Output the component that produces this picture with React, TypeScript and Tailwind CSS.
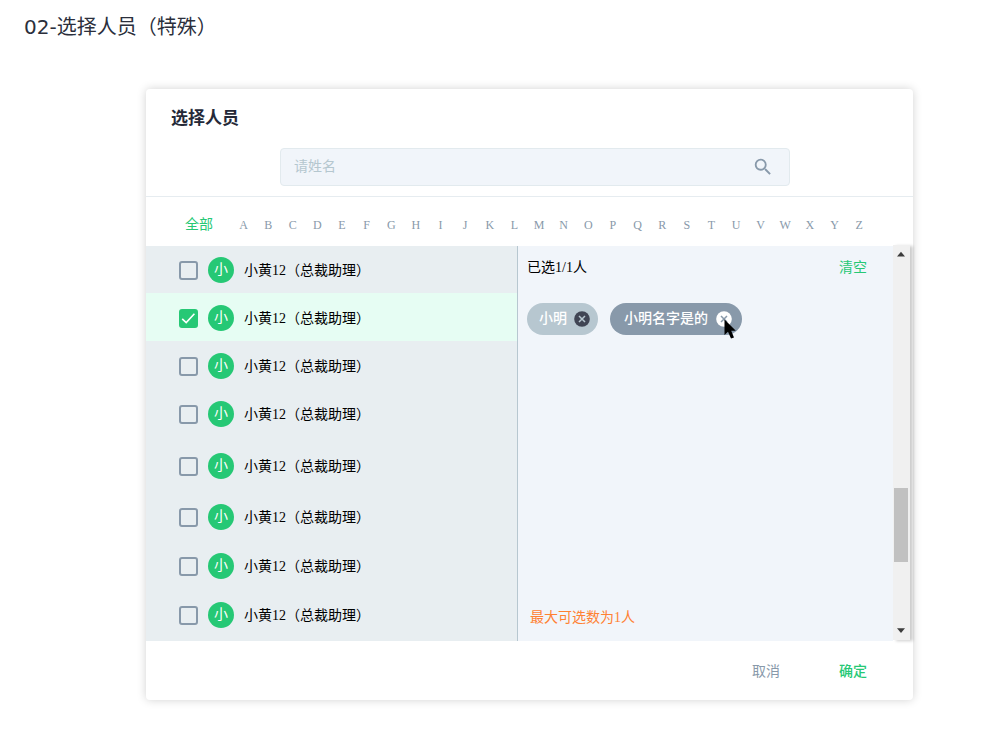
import { useState } from "react";
import { MdSearch } from "react-icons/md";

const LETTERS = "ABCDEFGHIJKLMNOPQRSTUVWXYZ".split("");

const PEOPLE = [
  { id: 1, row: "h-[47px] pt-[11px]" },
  { id: 2, row: "h-[48px] pt-3" },
  { id: 3, row: "h-[48px] pt-3" },
  { id: 4, row: "h-[52px] pt-3" },
  { id: 5, row: "h-[51px] pt-3" },
  { id: 6, row: "h-[49px] pt-3" },
  { id: 7, row: "h-[49px] pt-3" },
  { id: 8, row: "h-[51px] pt-3" },
];

function PersonRow({ id, row, checked, onToggle }: { id: number; row: string; checked: boolean; onToggle: () => void }) {
  return (
    <li className={`${row} ${checked ? "bg-[#e6fdf3]" : ""} pl-[33px]`}>
      <label htmlFor={`person-${id}`} className="flex h-[26px] items-center">
        <span className="grid h-[19px] w-[19px] shrink-0">
          <input
            id={`person-${id}`}
            type="checkbox"
            checked={checked}
            onChange={onToggle}
            className="peer col-start-1 row-start-1 h-[19px] w-[19px] appearance-none rounded-[3px] border-2 border-[#8899aa] checked:border-[#26c875] checked:bg-[#26c875]"
          />
          <svg viewBox="0 0 19 19" className="pointer-events-none invisible col-start-1 row-start-1 h-[19px] w-[19px] peer-checked:visible" fill="none" stroke="#fff" strokeWidth="1.6">
            <path d="M3.2 9.8 7.2 13.6 15.4 4.8" />
          </svg>
        </span>
        <span className="ml-[10px] flex h-[26px] w-[26px] shrink-0 items-center justify-center rounded-full bg-[#26c875] text-sm text-white">小</span>
        <span className="ml-[10px] pt-[2px] text-sm whitespace-nowrap text-black">小黄12（总裁助理）</span>
      </label>
    </li>
  );
}

function CloseIcon({ disc, cross }: { disc: string; cross: string }) {
  return (
    <svg viewBox="0 0 16 16" className="h-4 w-4" aria-hidden="true">
      <circle cx="8" cy="8" r="7.8" fill={disc} />
      <path d="M5 5 11 11M11 5 5 11" stroke={cross} strokeWidth="1.5" />
    </svg>
  );
}

export default function App() {
  const [selected, setSelected] = useState<number[]>([2]);
  const toggle = (id: number) =>
    setSelected((ids) => (ids.includes(id) ? ids.filter((i) => i !== id) : [...ids, id]));

  return (
    <div lang="zh-CN" className="bg-white pb-[34px] font-['Liberation_Serif','Noto_Sans_CJK_SC',sans-serif]">
      <h1 className="px-6 pt-3 font-['DejaVu_Sans','Noto_Sans_CJK_TC',sans-serif] text-xl leading-[30px] text-[#2b2f3c]">02-选择人员（特殊）</h1>

      <section aria-label="选择人员" className="mt-[47px] mr-[84px] ml-[146px] rounded bg-white shadow-[0_0_10px_rgba(0,0,0,0.18)]">
        <header className="border-b border-[#e6ecf0] pb-[10px]">
          <h2 className="px-[25px] pt-[18px] text-[17px] leading-6 font-bold text-[#252938]">选择人员</h2>
          <div className="mt-[17px] mr-[123px] ml-[134px] flex h-[38px] items-center rounded border border-[#e2eaee] bg-[#f1f5fa] pr-[15px] pl-[13px]">
            <input aria-label="姓名" placeholder="请姓名" className="min-w-0 flex-1 bg-transparent text-sm text-[#252938] outline-none placeholder:text-[#b5c7cf]" />
            <button type="button" aria-label="搜索" className="text-[#8899aa]">
              <MdSearch size={22} />
            </button>
          </div>
        </header>

        <nav aria-label="字母筛选" className="flex h-[49px] items-center pt-[6px] pr-[50px] pl-[39px]">
          <button type="button" className="mr-[27px] shrink-0 text-sm text-[#26c875]">全部</button>
          <div className="flex flex-1 justify-between pt-px text-xs text-[#8899aa]">
            {LETTERS.map((l) => (
              <button type="button" key={l} className="flex w-[7px] justify-center">{l}</button>
            ))}
          </div>
        </nav>

        <div className="flex">
          <ul className="w-[371px] shrink-0 bg-[#e8eef1]">
            {PEOPLE.map((p) => (
              <PersonRow key={p.id} id={p.id} row={p.row} checked={selected.includes(p.id)} onToggle={() => toggle(p.id)} />
            ))}
          </ul>

          <div className="flex flex-1 flex-col border-l border-[#b7c7d0] bg-[#f1f5fa]">
            <div className="flex items-center justify-between pt-3 pr-[26px] pl-[9px] text-sm leading-5">
              <p className="text-black">已选1/1人</p>
              <button type="button" className="text-[#26c875]">清空</button>
            </div>
            <div className="mt-[25px] flex gap-3 pl-[9px] text-sm font-medium text-white">
              <span className="flex h-8 items-center gap-[7px] rounded-full bg-[#b7c7d0] pr-2 pl-3">
                小明
                <button type="button" aria-label="移除小明">
                  <CloseIcon disc="#404554" cross="#b7c7d0" />
                </button>
              </span>
              <span className="relative flex h-8 items-center gap-2 rounded-full bg-[#8899aa] pr-[10px] pl-[14px]">
                小明名字是的
                <button type="button" aria-label="移除小明名字是的">
                  <CloseIcon disc="#fff" cross="#8899aa" />
                </button>
                <svg viewBox="0 0 12 20" className="absolute top-4 right-[6px] h-5 w-3" aria-hidden="true">
                  <path d="M0.5 0.5V16L4 12.8 7 19.6 10 18.4 7.2 11.8H11.8Z" fill="#000" />
                </svg>
              </span>
            </div>
            <p className="mt-auto pb-[13px] pl-3 text-sm leading-5 text-[#ff8132]">最大可选数为1人</p>
          </div>

          <div className="-mt-px mr-[3px] mb-px flex w-[17px] shrink-0 flex-col items-start bg-[#f0f0f0] shadow-[3px_1px_3px_rgba(0,0,0,0.2)]" aria-hidden="true">
            <svg viewBox="0 0 17 17" className="h-[17px] w-[17px]"><path d="M4 11.5 8 6.8 12 11.5Z" fill="#3c3c3c" /></svg>
            <div className="mt-[226px] ml-px h-[74px] w-[14px] bg-[#c1c1c1]" />
            <svg viewBox="0 0 17 17" className="mt-auto h-[17px] w-[17px]"><path d="M4 5.3 8 10 12 5.3Z" fill="#3c3c3c" /></svg>
          </div>
        </div>

        <footer className="flex h-[59px] items-center justify-end gap-[59px] pt-[2px] pr-[46px] text-sm">
          <button type="button" className="text-[#8899aa]">取消</button>
          <button type="button" className="font-medium text-[#26c875]">确定</button>
        </footer>
      </section>
    </div>
  );
}
